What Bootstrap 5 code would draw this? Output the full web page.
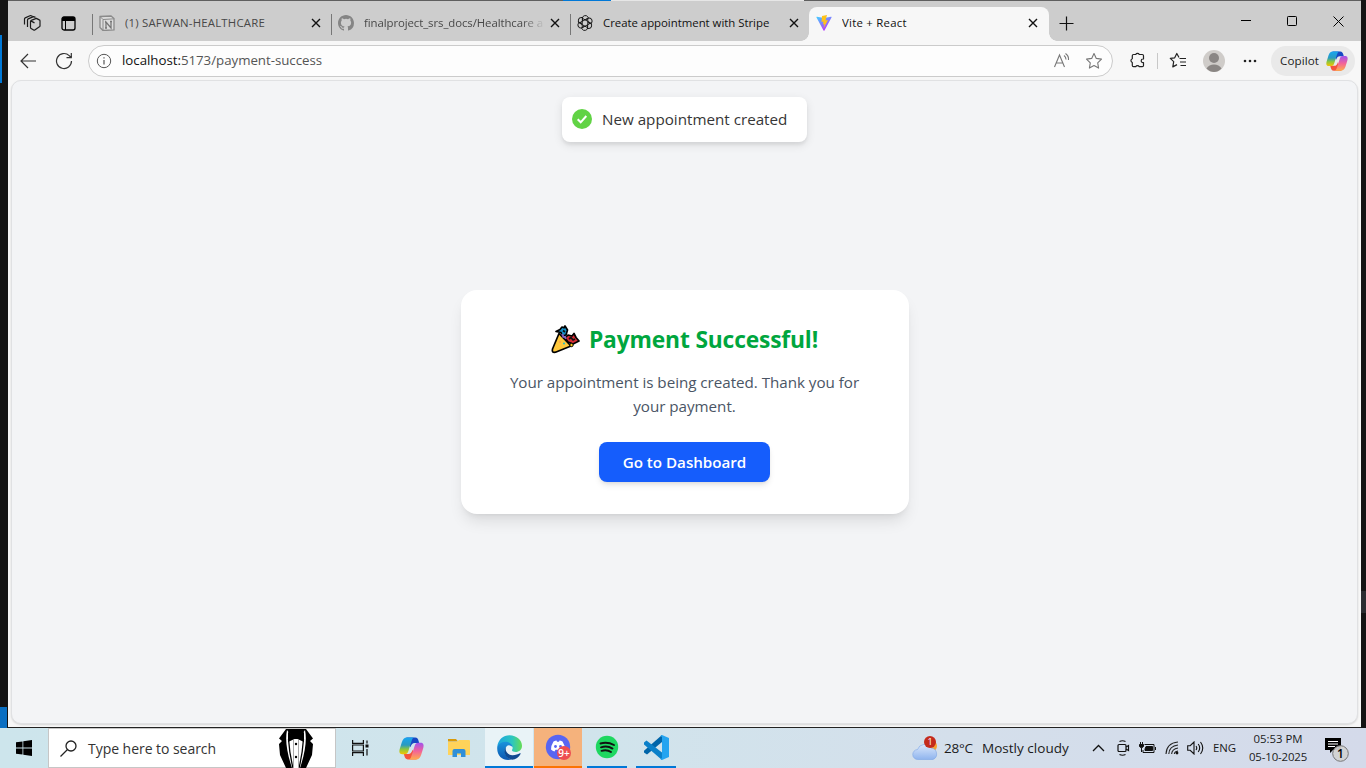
<!DOCTYPE html>
<html lang="en">
<head>
<meta charset="utf-8">
<meta name="viewport" content="width=device-width, initial-scale=1">
<title>Vite + React</title>
<link rel="stylesheet" href="https://cdn.jsdelivr.net/npm/bootstrap@5.3.0/dist/css/bootstrap.min.css">
<style>
body{width:1366px;height:768px;overflow:hidden;background:#141414;font-family:"Open Sans","Noto Sans",sans-serif;color:#1b1b1b}
svg{display:block;flex:none}
.desk{height:728px;width:1366px}
.edge-l{width:8px}.edge-l i{display:block}
.edge-r{width:5px}
.win{width:1353px;border-bottom:1px solid #222;background:#f7f7f7}
.topline{height:1px;background:#5f5f5f}
.strip{height:40px;background:#cdcdcd;padding-left:6px}
.sbtn{width:36px}
.btab{width:239px;height:40px;font-size:11.4px;padding-left:7px;position:relative}
.btab::before{content:"";position:absolute;left:0;top:13px;width:1px;height:21px;background:#777}
.btab .t{margin-left:10px;width:182px;overflow:hidden;white-space:nowrap;line-height:20px}
.btab .x{margin-left:4px}
.btab .fade-end{-webkit-mask-image:linear-gradient(90deg,#000 158px,transparent 181px);mask-image:linear-gradient(90deg,#000 158px,transparent 181px)}
.dim{color:#484848}
.on{width:240px;height:34px;margin-top:6px;background:#f7f7f7;border-radius:8px 8px 0 0;padding-bottom:2px}
.on::before{left:-8px;top:26px;width:8px;height:8px;background:radial-gradient(circle at 0 0,#cdcdcd 7.5px,#f7f7f7 8px)}
.on::after{content:"";position:absolute;right:-8px;top:26px;width:8px;height:8px;background:radial-gradient(circle at 100% 0,#cdcdcd 7.5px,#f7f7f7 8px)}
.wbtn{width:46px}
.tools{height:39px;padding-left:2px}
.omni{width:1025px;height:32px;border:1px solid #cbcbcb;border-radius:16px;background:#fdfdfd;margin-left:6px;padding:0 9px 0 7px;font-size:13.3px;color:#555}
.pill{width:84px;height:30px;border-radius:15px;background:#e9e9e9;font-size:11.6px;padding-left:9px}
.page{margin:0 3px 3px 3px;border:1px solid #e0e1e3;border-radius:10px;background:#f3f4f6;flex:1;box-shadow:0 1px 2px #0002}
.note{top:16px;left:550px;width:245px;height:45px;border-radius:8px;background:#fff;color:#363636;font-size:15.2px;padding:0 0 1px 10px;box-shadow:0 3px 10px rgba(0,0,0,.1),0 3px 3px rgba(0,0,0,.05)}
.done{width:448px;height:224px;border-radius:16px;box-shadow:0 10px 15px -3px rgba(0,0,0,.1),0 4px 6px -4px rgba(0,0,0,.1);padding:32px;background:#fff}
.done h1{font-size:22.8px;line-height:32px;letter-spacing:-.16px;color:#00a63e;margin:0 0 16px;padding-top:3px;height:32px}
.done p{font-size:15.2px;line-height:24px;letter-spacing:-.03px;color:#4a5565;margin:0 0 24px}
.go,.go:hover{width:171px;height:40px;background:#155dfc;border-radius:8px;color:#fff;font-weight:600;font-size:15.2px;letter-spacing:-.03px;padding:0;border:0;box-shadow:0 4px 6px -1px rgba(0,0,0,.1),0 2px 4px -2px rgba(0,0,0,.1)}
.bar{height:40px;width:1366px;background:linear-gradient(90deg,#cde5ec,#d1e4ec 45%,#d4dfeb 70%,#d4daea)}
.find{width:288px;height:40px;background:#fff;border:1px solid #c6c6c6;font-size:14px;padding-left:11px}
.app{height:40px}
.u{border-bottom:2px solid #0078d7}
.tiny{font-size:11.4px;line-height:18px}
.f{white-space:nowrap}
</style>
</head>
<body>
<svg width="0" height="0" class="position-absolute">
<defs>
<linearGradient id="cA" x1="0" y1="0" x2="0" y2="1"><stop offset="0" stop-color="#16a5f0"/><stop offset=".45" stop-color="#2a9ac0"/><stop offset=".7" stop-color="#8cc63e"/><stop offset="1" stop-color="#f5c400"/></linearGradient>
<linearGradient id="cB" x1="0" y1="0" x2="0" y2="1"><stop offset="0" stop-color="#a052ee"/><stop offset=".5" stop-color="#f2629a"/><stop offset="1" stop-color="#ffab4c"/></linearGradient>
<symbol id="cop" viewBox="0 0 24 24"><path d="M7 1.500h8.500c2.200 0 2.800 1.500 3.300 3.200l.6 2H15c-2 0-3 1-4 4z" fill="#1747c4"/><path d="M17 22.500H8.500c-2.200 0-2.800-1.500-3.300-3.200l-.6-2H9c2 0 3-1 4-4z" fill="#f5533c"/><path d="M7.500 1.500H15c-2 0-2.500 2-3 3.500L9 14.500c-.7 2.200-1.600 3-3.500 3H3.200c-3 0-3.200-2.500-2.500-5l2-6.500c1-3 2.300-4.500 4.800-4.500z" fill="url(#cA)"/><path d="M16.500 22.500H9c2 0 2.500-2 3-3.500l3-9.500c.7-2.200 1.600-3 3.500-3h2.300c3 0 3.200 2.500 2.500 5l-2 6.500c-1 3-2.300 4.500-4.800 4.500z" fill="url(#cB)"/></symbol>
<symbol id="close" viewBox="0 0 10 10"><path d="M1 1l8 8M9 1l-8 8" stroke="#111" stroke-width="1.400"/></symbol>
</defs></svg>

<div class="desk d-flex">
  <div class="edge-l"><i style="height:35px"></i><i style="height:48px;width:2px;background:#0078d7"></i><i style="height:624px"></i><i style="height:21px;width:7px;background:#0a6fc2"></i></div>
  <main class="win d-flex flex-column">
    <div class="topline d-flex"><i style="width:555px"></i><i style="width:48px;background:#0078d7"></i><i style="width:193px;background:#e6e6e6"></i></div>
    <div class="strip d-flex">
      <div class="sbtn d-flex align-items-center justify-content-center pt-1"><svg width="18" height="18" viewBox="0 0 18 18" fill="none" stroke="#1b1b1b" stroke-width="1.200" stroke-linejoin="round"><path d="M7.500 7.500q0-.8.8-1.100l5-2 3 1.500q.7.300.7 1v5q0 .6-.6.900l-4.600 3.200q-.6.300-1.200 0l-2.500-1.500q-.6-.3-.6-1zM7.800 6.900l3.700 2M4.500 13V6q0-.8.7-1.100l5.300-2.300 2 .8M1.500 10.500V5q0-.8.7-1.100L7.500 1.500l2 .7"/></svg></div>
      <div class="sbtn d-flex align-items-center justify-content-center pt-1"><svg width="15" height="15" viewBox="0 0 15 15"><rect x="1" y="1" width="13" height="13" rx="2" fill="none" stroke="#000" stroke-width="1.300"/><path d="M1 2.500Q1 1 3 1h9q2 0 2 1.500V5H1z"/><path d="M4.500 5v9" stroke="#000"/></svg></div>
      <div style="width:6px"></div>
      <div class="btab d-flex align-items-center pt-1 dim"><svg width="16" height="16" viewBox="0 0 16 16"><path d="M1 1.500L12 1l3 2.500V15l-11 .5-3-3z" fill="#dcdcdc" stroke="#8a8a8a" stroke-width="1.300"/><path d="M1.500 2L4 4.500l11-.7M4 4.500v11" stroke="#8a8a8a" fill="none"/><path d="M7 13V7l5 6V6.500M6 7h1.500M11 6.500h2M6 13h2" stroke="#777" stroke-width="1.300" fill="none"/></svg><span class="t" style="letter-spacing:.2px">(1) SAFWAN-HEALTHCARE</span><svg class="x" width="10" height="10"><use href="#close"/></svg></div>
      <div class="btab d-flex align-items-center pt-1 dim"><svg width="16" height="16" viewBox="0 0 16 16" fill="#858585"><path d="M8 0C3.580 0 0 3.580 0 8c0 3.540 2.290 6.530 5.470 7.590.4.070.55-.17.55-.38 0-.19-.01-.82-.01-1.490-2.010.37-2.530-.49-2.690-.94-.09-.23-.48-.94-.82-1.130-.28-.15-.68-.52-.01-.53.63-.01 1.080.58 1.230.82.72 1.210 1.870.87 2.330.66.070-.52.28-.87.51-1.070-1.780-.2-3.640-.89-3.640-3.950 0-.87.31-1.590.82-2.150-.08-.2-.36-1.020.08-2.120 0 0 .67-.21 2.200.82a7.400 7.400 0 014 0c1.530-1.040 2.200-.82 2.200-.82.44 1.100.16 1.920.08 2.120.51.560.82 1.270.82 2.150 0 3.070-1.870 3.750-3.650 3.950.29.25.54.73.54 1.480 0 1.070-.01 1.930-.01 2.200 0 .21.15.46.55.38A8 8 0 0016 8c0-4.420-3.580-8-8-8z"/></svg><span class="t fade-end" style="letter-spacing:-.08px">finalproject_srs_docs/Healthcare a</span><svg class="x" width="10" height="10"><use href="#close"/></svg></div>
      <div class="btab d-flex align-items-center pt-1"><svg width="16" height="16" viewBox="-12 -12 24 24" fill="none" stroke="#1b1b1b" stroke-width="1.500" stroke-linejoin="round"><g id="petal"><path d="M-4 -2.300V-7.500A4.600 4.600 0 0 1 4.200 -9.300M-4 -7L.5 -4.600 5.200 -7.300A4.600 4.600 0 0 0 4.200 -9.300M.5 -4.600L4 -2.500"/></g><use href="#petal" transform="rotate(60)"/><use href="#petal" transform="rotate(120)"/><use href="#petal" transform="rotate(180)"/><use href="#petal" transform="rotate(240)"/><use href="#petal" transform="rotate(300)"/></svg><span class="t" style="color:#111;letter-spacing:-.02px">Create appointment with Stripe</span><svg class="x" width="10" height="10"><use href="#close"/></svg></div>
      <div class="btab on d-flex align-items-center"><svg width="16" height="16" viewBox="0 0 32 32"><defs><linearGradient id="v1" x1="0" y1="0" x2=".6" y2="1"><stop stop-color="#41d1ff"/><stop offset="1" stop-color="#bd34fe"/></linearGradient></defs><path d="M31 5L17 31c-.5.8-1.500.8-2 0L1 5c-.5-1 .2-1.800 1-1.600L16 6l14-2.600c1-.2 1.500.8 1 1.600z" fill="url(#v1)"/><path d="M22 0L12 2l-1 12 4-1-1 6 3-1-2 9 9-17-5 1 3-11z" fill="#ffc21a"/></svg><span class="t" style="color:#111;letter-spacing:.25px">Vite + React</span><svg class="x" width="10" height="10"><use href="#close"/></svg></div>
      <div class="sbtn d-flex align-items-center justify-content-center pt-1" style="margin-left:-1px"><svg width="15" height="15" viewBox="0 0 15 15"><path d="M7.500.5v14M.5 7.500h14" stroke="#111" stroke-width="1.200"/></svg></div>
      <div class="d-flex align-items-center ms-auto">
        <div class="wbtn d-flex justify-content-center"><svg width="10" height="10"><path d="M0 4.500h10" stroke="#000"/></svg></div>
        <div class="wbtn d-flex justify-content-center"><svg width="10" height="10"><rect x=".5" y=".5" width="9" height="9" rx=".8" fill="none" stroke="#000"/></svg></div>
        <div class="wbtn d-flex justify-content-center"><svg width="11" height="11"><path d="M.5.5l10 10M10.500.5l-10 10" stroke="#000"/></svg></div>
      </div>
    </div>
    <div class="tools d-flex align-items-center">
      <div class="sbtn d-flex justify-content-center"><svg width="17" height="16" viewBox="0 0 17 16" fill="none" stroke="#333" stroke-width="1.200"><path d="M16 8H1M8 1L1 8l7 7"/></svg></div>
      <div class="sbtn d-flex justify-content-center"><svg width="18" height="18" viewBox="0 0 18 18" fill="none" stroke="#333" stroke-width="1.200"><path d="M16.500 9a7.500 7.500 0 11-2.300-5.400L16 5.500M16.300 1v4.700h-4.800"/></svg></div>
      <div class="omni d-flex align-items-center"><svg width="16" height="16" viewBox="0 0 16 16"><circle cx="8" cy="8" r="6.700" fill="none" stroke="#555"/><path d="M8 7v4.500M8 4.300v1.300" stroke="#555" stroke-width="1.200"/></svg><span class="f" style="margin-left:10px;padding-top:1px;letter-spacing:-.03px"><span style="color:#111">localhost:</span>5173/payment-success</span>
        <svg class="ms-auto" width="18" height="16" viewBox="0 0 18 16" fill="none" stroke="#777" stroke-width="1.100"><path d="M1.500 14L6.500 2l5 12M3.200 10h6.600M11 2.500q2 1.500 2 4M12.500.5q3.500 2.500 3 6.500"/></svg>
        <svg style="margin-left:14px" width="18" height="18" viewBox="0 0 18 18" fill="none" stroke="#777" stroke-width="1.100" stroke-linejoin="round"><path d="M9 1.500l2.300 4.900 5.200.7-3.800 3.700.9 5.300L9 13.600l-4.600 2.500.9-5.300L1.500 7.100l5.200-.7z"/></svg></div>
      <svg style="margin-left:16px" width="17" height="17" viewBox="0 0 17 17" fill="none" stroke="#222" stroke-width="1.200" stroke-linejoin="round"><path d="M4.500 2.500h2.200a2 2 0 013.600 0h3q1.200 0 1.200 1.200V7H14a1.800 1.800 0 000 3.600h.5v2.900q0 1.200-1.200 1.200h-3a2 2 0 00-3.600 0H4.500q-1.200 0-1.200-1.200V10.500a2 2 0 010-3.800v-3q0-1.200 1.200-1.200z"/></svg>
      <i style="width:1px;height:16px;background:#c8c8c8;margin-left:11px"></i>
      <svg style="margin-left:11px" width="18" height="17" viewBox="0 0 18 17" fill="none" stroke="#222" stroke-width="1.200" stroke-linejoin="round"><path d="M10 5.500L7.800 1.500 5.700 5.800 1.300 6.400l3.400 3.200-.9 5.300 4.200-2.300M10.500 6.500H17M11 10h6M11.500 13.500H17"/></svg>
      <svg style="margin-left:16px" width="22" height="22" viewBox="0 0 22 22"><circle cx="11" cy="11" r="11" fill="#cfccc9"/><circle cx="11" cy="8" r="5" fill="#8a8684"/><path d="M3.500 18.500Q6 14.500 11 14.500t7.500 4Q15 22 11 22t-7.500-3.500z" fill="#8a8684"/></svg>
      <svg style="margin-left:18px" width="14" height="4" fill="#222"><circle cx="2" cy="2" r="1.300"/><circle cx="7" cy="2" r="1.300"/><circle cx="12" cy="2" r="1.300"/></svg>
      <div class="pill d-flex align-items-center" style="margin-left:14px"><span class="f" style="letter-spacing:.09px">Copilot</span><svg style="margin-left:7px" width="22" height="22"><use href="#cop"/></svg></div>
    </div>
    <section class="page position-relative d-flex align-items-center justify-content-center">
      <div class="note position-absolute d-flex align-items-center"><svg width="20" height="20" viewBox="0 0 20 20"><circle cx="10" cy="10" r="10" fill="#61d345"/><path d="M5.700 10.200l3 3.100L14.300 7" fill="none" stroke="#fff" stroke-width="2"/></svg><span class="f" style="margin-left:10px">New appointment created</span></div>
      <div class="done text-center">
        <h1 class="fw-bold d-flex justify-content-center align-items-center"><svg style="margin-right:9px" width="29" height="29" viewBox="0 0 29 29" stroke="#000" stroke-width="1.700" stroke-linejoin="round"><path d="M9 4.500l2-2.500 2 .8 1-1.800 2.500 4-1.500 5-4 1-1-3.500-5-1z" fill="#1691c8"/><path d="M8 8.500L1.500 24q-1 4 3 3.200L20 21z" fill="#ffc83d"/><path d="M14 13l3-3 4 1 2-2.500 2 4 3 3.500-6 3-5-2z" fill="#d62c35"/><path d="M10.500 10q2-1 1.500 2 3-1 2.500 2" fill="none" stroke="#8562c5"/><path d="M12 5.500l2 1.500M18 14l2-1.500 2 2.500 2-1" stroke="#111" fill="none"/><circle cx="9" cy="17" r="1" fill="#ff9d57" stroke="none"/><circle cx="13" cy="18.500" r="1" fill="#16bdd0" stroke="none"/><circle cx="20.500" cy="20" r="1.700" fill="#fc2" stroke-width="1"/></svg><span class="f">Payment Successful!</span></h1>
        <p>Your appointment is being created. Thank you for<br>your payment.</p>
        <button class="btn go">Go to Dashboard</button>
      </div>
    </section>
  </main>
  <div class="edge-r"><i class="d-block" style="height:591px"></i><i class="d-block" style="height:22px;background:#2b2d31"></i></div>
</div>

<footer class="bar d-flex align-items-center">
  <div class="d-flex justify-content-center" style="width:48px"><svg width="16" height="16" viewBox="0 0 16 16"><path d="M0 2.300L6.500 1.400v6.200H0zM7.300 1.300L16 0v7.600H7.300zM0 8.400h6.500v6.200L0 13.700zM7.300 8.400H16V16l-8.700-1.300z"/></svg></div>
  <div class="find d-flex align-items-center"><svg width="17" height="17" viewBox="0 0 17 17" fill="none" stroke="#222" stroke-width="1.300"><circle cx="11" cy="6" r="5"/><path d="M7.500 9.500L.5 16.500"/></svg><span class="f" style="margin-left:11px;padding-top:1px;color:#333;width:128px;letter-spacing:-.04px">Type here to search</span>
    <svg style="margin-left:62px" width="36" height="39" viewBox="0 0 36 39"><path d="M8 0L1 9.500l3 2.500-3 3 1 11 6 13h20l6-13 1-11-3-3 3-2.500L28 0z"/><path d="M9 1Q6 15 14 39h8Q30 15 27 1l-2 3-6 4h-2L11 4z" fill="#fff"/><path d="M10.500 10q1 15 4.500 29M25.500 10q-1 15-4.500 29" fill="none" stroke="#000" stroke-width="1.300"/><path d="M15.500 11v28M20.500 11v28" stroke="#aaa" fill="none"/><path d="M10 3l6.500 3h3L26 3v10l-6.500-3h-3L10 13z"/><circle cx="18" cy="15" r="1.200"/><circle cx="18" cy="28" r="1.200"/></svg></div>
  <div class="d-flex justify-content-center" style="width:48px"><svg width="17" height="16" viewBox="0 0 17 16" fill="none" stroke="#111" stroke-width="1.200"><path d="M.6 0v3.400h10.800V0M.6 16v-3.400h10.800V16M.6 5h10.800v6H.6zM15 .5v3M15 9v6.500"/><path d="M13.500 4.500h3v3h-3z" fill="#111" stroke="none"/></svg></div>
  <div class="d-flex justify-content-center" style="width:54px"><svg width="25" height="25"><use href="#cop"/></svg></div>
  <div class="d-flex justify-content-center" style="width:42px"><svg width="22" height="20" viewBox="0 0 22 20"><path d="M0 1h8l2 2.500H0z" fill="#d99a08"/><path d="M0 4l9-.2L11 2h10q1 0 1 1v14H0z" fill="#ffd35a"/><path d="M4.500 19v-6q0-2 2-2h9q2 0 2 2v6H13v-3.500H9V19z" fill="#2f8fd8"/></svg></div>
  <div style="width:5px"></div>
  <div class="app u d-flex justify-content-center align-items-center" style="width:48px;background:#e9f3f7"><svg width="25" height="25" viewBox="0 0 24 24"><defs><linearGradient id="e1" x1="0" x2="1"><stop stop-color="#1ca4e0"/><stop offset=".6" stop-color="#2cc6c0"/><stop offset="1" stop-color="#66dc54"/></linearGradient><linearGradient id="e2" x1="0" y1="0" x2="0" y2="1"><stop stop-color="#1b93dc"/><stop offset="1" stop-color="#0c57b0"/></linearGradient></defs><path d="M.3 11C1 4.500 6 .2 12 .2c7 0 12 5 12 10 0 4-3 6-6 6-2.500 0-4-1-3.500-2 1.500-2.500 0-5.200-4-5.200C6 9 2 10 .3 11z" fill="url(#e1)"/><path d="M.3 11C2 8 5 6.500 8 6.500c3.500 0 7 2 7 5.500-1-2-4-3-5.500-1.500C5.500 14 8 22 14 23.600 6 25.500-.8 20 .3 11z" fill="url(#e2)"/><path d="M9.300 10.600c-2.300 2.800-.5 8.400 5.200 8.800 3 .2 5.500-.9 7.500-1.800.5-.2.900.2.600.7C21 21.500 18 23.500 14.500 23.700 8 23 5 15 9.300 10.600z" fill="#104a91"/></svg></div>
  <div class="app d-flex justify-content-center align-items-center" style="width:48px;background:#f5b27c;border-bottom:2px solid #fb7305;margin-left:1px"><svg width="26" height="26" viewBox="0 0 26 26"><circle cx="13" cy="13" r="12.200" fill="#5865f2"/><path d="M8.500 7.500q2-1 3-1l.5 1.200h2l.5-1.200q1 0 3 1 2.500 4 2.500 8-1.500 1.500-3.500 2l-1-1.700h-5l-1 1.700q-2-.5-3.500-2 0-4 2.500-8z" fill="#fff"/><circle cx="10.500" cy="12.500" r="1.400" fill="#5865f2"/><circle cx="15.500" cy="12.500" r="1.400" fill="#5865f2"/><circle cx="19" cy="19" r="7" fill="#ed4d51"/><text x="19" y="22.500" text-anchor="middle" font-size="10" font-weight="600" fill="#fff">9+</text></svg></div>
  <div class="app u d-flex justify-content-center align-items-center" style="width:40px;margin-left:5px"><svg width="24" height="24" viewBox="0 0 24 24"><circle cx="12" cy="12" r="11.200" fill="#1ed760"/><path d="M5.500 8.500q7-2 13.500 1.500M6 12.300q6.500-2 11.500 1.300M6.500 15.800q5.500-1.600 9.500 1.200" fill="none" stroke="#111" stroke-width="1.900" stroke-linecap="round"/></svg></div>
  <div class="app u d-flex justify-content-center align-items-center" style="width:40px;margin-left:9px"><svg width="25" height="25" viewBox="0 0 25 25"><path d="M18 0v7L3 19.500 0 17.500v-1.700z" fill="#0065a9"/><path d="M0 9.500v-2l2.500-2L18 17.500V25z" fill="#0b80c9"/><path d="M18 0l7 3v19l-7 3q-1 0-1.500-1l1.500-1V2l-1.500-1q.5-1 1.500-1z" fill="#25a4f0"/></svg></div>
  <div class="d-flex align-items-center" style="margin-left:236px"><svg width="27" height="26" viewBox="0 0 27 26"><defs><linearGradient id="w" x1="0" y1="0" x2="0" y2="1"><stop stop-color="#dbe8fb"/><stop offset="1" stop-color="#8fb4ee"/></linearGradient></defs><circle cx="19" cy="11" r="6" fill="#f7a233"/><path d="M6 24.500a5 5 0 01-.5-10A7.500 7.500 0 0119 13a6 6 0 012 11.500z" fill="url(#w)" stroke="#7ea6e6" stroke-width=".6"/><circle cx="18" cy="7" r="6" fill="#c42b1c"/><text x="18" y="10.300" text-anchor="middle" font-size="9" fill="#fff">1</text></svg><span class="f" style="margin-left:5px;padding-top:1px;width:29px;font-size:13.500px;letter-spacing:-.2px">28°C</span><span class="f" style="margin-left:9px;padding-top:1px;width:87px;font-size:13.500px;letter-spacing:.02px">Mostly cloudy</span></div>
  <svg style="margin-left:23px" width="13" height="8" viewBox="0 0 13 8"><path d="M1 7l5.500-5.500L12 7" fill="none" stroke="#111" stroke-width="1.300"/></svg>
  <svg style="margin-left:12px" width="13" height="16" viewBox="0 0 13 16" fill="none" stroke="#111" stroke-width="1.200"><rect x="1" y="4.500" width="8" height="7" rx="1"/><path d="M9 7l2.500-1.500v5L9 9M2.500 1.500q3-1.500 6 0M2.500 14.500q3 1.500 6 0"/></svg>
  <svg style="margin-left:9px" width="17" height="12" viewBox="0 0 17 12" fill="none" stroke="#111"><path d="M5.500 2.500h9.500v8H4V8M16.500 5v3"/><path d="M7 4.500h6.500v4H6V7z" fill="#111"/><path d="M1.500 0v2M3.500 0v2M.5 2.500h4v2l-2 1.500-2-1.500zM2.500 6v4" fill="#111"/></svg>
  <svg style="margin-left:9px" width="14" height="14" viewBox="0 0 14 14" fill="none" stroke="#222" stroke-width="1.100"><path d="M1 13Q1.500 2 13 1M3.800 13Q4.200 5 13 4M6.600 13Q7 8 13 7"/><path d="M9.300 13q.5-2.600 3.700-3"/><circle cx="12" cy="12" r="1.400" fill="#111" stroke="none"/></svg>
  <svg style="margin-left:8px" width="17" height="14" viewBox="0 0 17 14" fill="none" stroke="#111" stroke-width="1.100"><path d="M.7 4.700h2.500L7 1v12L3.200 9.300H.7zM9 5q1.500 2 0 4M11.200 3q3 4 0 8M13.500 1q4.500 6 0 12"/></svg>
  <span class="f tiny" style="margin-left:9px;width:23px;letter-spacing:-.06px">ENG</span>
  <div class="text-center tiny" style="width:58px;margin-left:13px"><span class="f">05:53 PM</span><br><span class="f" style="letter-spacing:-.14px">05-10-2025</span></div>
  <svg style="margin-left:17px;margin-top:4px" width="27" height="26" viewBox="0 0 27 26"><path d="M1 1h16v12H9l-3 3v-3H1z"/><path d="M4 4.500h10M4 7h10M4 9.500h7" stroke="#fff" fill="none"/><circle cx="16.500" cy="16.500" r="7.800" fill="#d2d2d2" fill-opacity=".93" stroke="#777"/><text x="16.500" y="21" text-anchor="middle" font-size="12" font-weight="600">1</text></svg>
</footer>
<script src="https://cdn.jsdelivr.net/npm/bootstrap@5.3.0/dist/js/bootstrap.bundle.min.js"></script>
</body>
</html>
